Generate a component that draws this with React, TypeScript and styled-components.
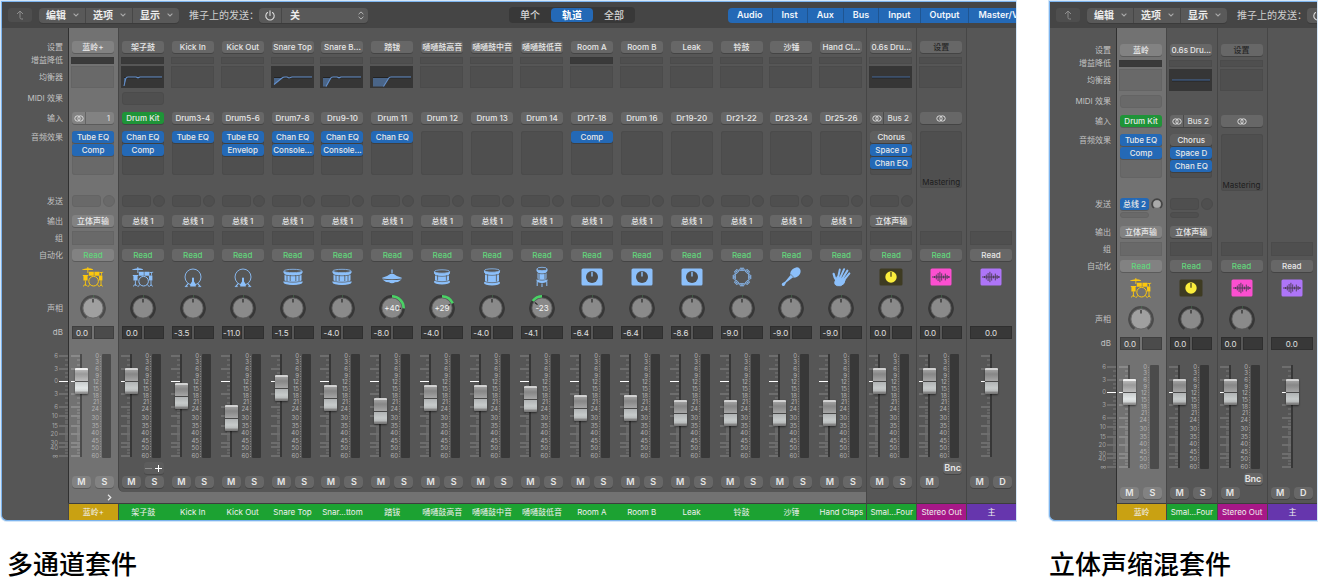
import React from "react";
import styled, { createGlobalStyle, css } from "styled-components";

const GlobalStyle = createGlobalStyle`
  *, *::before, *::after { box-sizing: border-box; }
  body {
    margin: 0;
    background: #fff;
    color: #dedede;
    font: 8px/12px Inter, "Noto Sans CJK SC", sans-serif;
  }
  button, input, select { font: inherit; color: inherit; border: 0; padding: 0; margin: 0; background: none; }
`;

/* ---------- page ---------- */

const Page = styled.main`
  display: flex;
  gap: 33px;
  padding: 1px 2px 0 1px;
`;

const Figure = styled.figure<{ $share: number }>`
  flex: ${(p) => p.$share} 1 0;
  min-width: 0;
  margin: 0;
`;

const Caption = styled.figcaption<{ $indent?: number }>`
  margin-top: 26px;
  padding-left: ${(p) => p.$indent ?? 0}px;
  color: #000;
  font: 500 26px/32px "Noto Sans CJK SC", sans-serif;
  white-space: nowrap;
`;

const MixerWindow = styled.section`
  overflow: hidden;
  background: #565656;
  border: 1px solid #7db4ee;
  border-right: 0;
  border-bottom-left-radius: 6px;
  box-shadow: 0 0 0 1px #d3e6f8;
`;

/* ---------- toolbar ---------- */

const Toolbar = styled.header`
  display: flex;
  align-items: center;
  height: 26px;
  padding-left: 6px;
  background: #454545;
  font-size: 10px;
  white-space: nowrap;
`;

const UpButton = styled.button`
  flex: none;
  display: flex;
  align-items: center;
  justify-content: center;
  width: 24px;
  height: 14px;
  margin-right: 7px;
  border-radius: 3px;
  background: #4e4e4e;
  color: #8d8d8d;
`;

const MenuGroup = styled.div`
  flex: none;
  display: flex;
  height: 15px;
  border-radius: 4px;
  background: #595959;
  box-shadow: 0 1px 0 #3b3b3b;
`;

const MenuButton = styled.button`
  display: flex;
  align-items: center;
  gap: 7px;
  padding: 0 6px 0 7px;
  font-weight: 700;
  color: #ececec;
  & + & { border-left: 1px solid #474747; }
`;

const SendLabel = styled.label`
  flex: none;
  width: 70px;
  margin-left: 10px;
  color: #cfcfcf;
`;

const PowerButton = styled.button`
  display: flex;
  align-items: center;
  justify-content: center;
  width: 22px;
  color: #dcdcdc;
`;

const SelectWrap = styled.span`
  display: flex;
  align-items: center;
  padding-right: 4px;
  border-left: 1px solid #474747;
`;

const Select = styled.select`
  appearance: none;
  width: 76px;
  height: 15px;
  padding-left: 8px;
  font-weight: 700;
  color: #ececec;
`;

const Spacer = styled.span<{ $grow: number }>`
  flex: ${(p) => p.$grow} 1 0;
`;

const Tabs = styled.div`
  flex: none;
  display: flex;
  padding: 1px 0;
  border-radius: 4px;
  background: #383838;
`;

const Tab = styled.button<{ $active?: boolean }>`
  width: 42px;
  height: 14px;
  border-radius: 4px;
  line-height: 14px;
  font-weight: ${(p) => (p.$active ? 700 : 500)};
  color: ${(p) => (p.$active ? "#fff" : "#d6d6d6")};
  background: ${(p) => (p.$active ? "#2469b6" : "transparent")};
`;

const Filters = styled.div`
  flex: 0 0 288px;
  min-width: 0;
  display: flex;
`;

const Filter = styled.button`
  flex: none;
  height: 15px;
  padding: 0 9px;
  background: #2469b6;
  color: #f2f6fb;
  font-size: 9px;
  font-weight: 600;
  &:first-child { border-radius: 4px 0 0 4px; }
  & + & { border-left: 1px solid #1f5591; }
`;

/* ---------- channel strips ---------- */

const Board = styled.div`
  display: flex;
`;

const rows = css<{ $tall?: boolean }>`
  display: grid;
  grid-template-rows: 16px 9px 26px 20px 19px 64px ${(p) => (p.$tall ? 28 : 20)}px 16px 18px 16px 30px 31px 27px 109px 14px 16px;
  padding-top: ${(p) => (p.$tall ? 16 : 13)}px;
`;

const Labels = styled.div`
  ${rows}
  flex: none;
  width: 66px;
  align-content: start;
  text-align: right;
  color: #c2c2c2;
`;

const RowLabel = styled.span<{ $line?: number }>`
  padding-right: 5px;
  line-height: ${(p) => p.$line ?? 12}px;
  white-space: nowrap;
`;

const Strip = styled.section<{ $selected?: boolean; $child?: boolean }>`
  --face: ${(p) => (p.$selected ? "#727272" : "#565656")};
  --slot: ${(p) => (p.$selected ? "#696969" : "#4f4f4f")};
  --edge: ${(p) => (p.$selected ? "#646464" : "#4b4b4b")};
  --key: ${(p) => (p.$selected ? "#828282" : "#676767")};
  --ring: ${(p) => (p.$selected ? "#4b4b4b" : "#373737")};
  --dial: ${(p) => (p.$selected ? "#a0a0a0" : "#8a8a8a")};
  --tick: ${(p) => (p.$selected ? "#a2a2a2" : "#868686")};
  --well: ${(p) => (p.$selected ? "#4b4b4b" : "#383838")};
  flex: 1 1 0;
  min-width: 0;
  background: ${(p) => (p.$child ? "#727272" : "var(--face)")};
`;

const StripBody = styled.div<{ $tall?: boolean; $line: string; $rounded?: boolean }>`
  ${rows}
  border-left: 1px solid ${(p) => p.$line};
  background: var(--face);
  border-bottom-left-radius: ${(p) => (p.$rounded ? 6 : 0)}px;
`;

const Row = styled.div<{ $wide?: boolean }>`
  display: flex;
  align-items: flex-start;
  min-width: 0;
  padding-left: ${(p) => (p.$wide ? 2 : 3)}px;
`;

const keyTones = {
  plain: "var(--key)",
  blue: "#2469b6",
  green: "#1f9438",
  grey: "#5f5f5f",
};

const Key = styled.button<{ $tone?: keyof typeof keyTones; $ink?: string; $width?: number }>`
  flex: none;
  display: block;
  width: ${(p) => p.$width ?? 42}px;
  height: 12px;
  border-radius: 3px;
  background: ${(p) => keyTones[p.$tone ?? "plain"]};
  box-shadow: 0 1px 0 rgba(0, 0, 0, 0.2);
  color: ${(p) => p.$ink ?? "#e8e8e8"};
  font-weight: 500;
  line-height: 12px;
  text-align: center;
  white-space: nowrap;
  overflow: hidden;
`;

const SplitKey = styled.div`
  display: flex;
  width: 42px;
  height: 12px;
  border-radius: 3px;
  background: var(--key);
  box-shadow: 0 1px 0 rgba(0, 0, 0, 0.2);
`;

const SplitPart = styled.button<{ $format?: boolean; $right?: boolean }>`
  display: flex;
  align-items: center;
  justify-content: ${(p) => (p.$right ? "flex-end" : "center")};
  flex: ${(p) => (p.$format ? "0 0 13px" : "1")};
  padding-right: ${(p) => (p.$right ? 4 : 0)}px;
  font-weight: 500;
  & + & { border-left: 1px solid var(--edge); }
`;

const Slot = styled.div<{ $w?: number; $h: number; $radius?: number; $lit?: boolean }>`
  flex: none;
  width: ${(p) => p.$w ?? 42}px;
  height: ${(p) => p.$h}px;
  border: 1px solid ${(p) => (p.$lit ? "#383838" : "var(--edge)")};
  border-radius: ${(p) => p.$radius ?? 0}px;
  background: ${(p) => (p.$lit ? "#3a3a3a" : "var(--slot)")};
`;

const EqView = styled.div<{ $on: boolean }>`
  width: 43px;
  height: 22px;
  border: ${(p) => (p.$on ? "0" : "1px solid var(--edge)")};
  background: ${(p) => (p.$on ? "#363636" : "var(--slot)")};
`;

const EffectRack = styled.div<{ $long?: boolean }>`
  display: flex;
  flex-direction: column;
  gap: 1px;
  width: 42px;
  height: ${(p) => (p.$long ? 57 : 44)}px;
  border-radius: 3px;
  background: var(--slot);
  box-shadow: inset 0 0 0 1px var(--edge);
`;

const MasteringButton = styled.button`
  margin-top: auto;
  height: 11px;
  color: #1d1d1d;
  line-height: 11px;
`;

const Sends = styled.div`
  display: grid;
  grid-template-columns: 29px 12px;
  column-gap: 2px;
  row-gap: 2px;
`;

const Centered = styled.div`
  display: flex;
  flex: none;
  width: 42px;
  justify-content: center;
`;

const IconBox = styled.span<{ $color: string }>`
  display: flex;
  align-items: center;
  height: 24px;
  color: ${(p) => p.$color};
`;

const KnobLabel = styled.label`
  position: relative;
  display: block;
  width: 26px;
  height: 26px;
`;

const KnobInput = styled.input`
  position: absolute;
  inset: 0;
  width: 100%;
  height: 100%;
  opacity: 0;
`;

const Levels = styled.div`
  display: flex;
  gap: 2px;
  width: 42px;
`;

const Level = styled.input`
  flex: 1;
  min-width: 0;
  width: 0;
  height: 13px;
  background: var(--well);
  box-shadow: inset 0 0 0 1px rgba(0, 0, 0, 0.15);
  color: #e0e0e0;
  text-align: center;
`;

const FaderArea = styled.div<{ $shift?: boolean }>`
  display: grid;
  grid-template: 106px / 31px 9px;
  padding-left: ${(p) => (p.$shift ? 14 : 2)}px;
`;

const ScaleSvg = styled.svg`
  grid-area: 1 / 1;
  display: block;
`;

const thumb = css`
  appearance: none;
  width: 13px;
  height: 26px;
  border: 0;
  border-radius: 1px;
  background: linear-gradient(
    #d2d2d2 0 2px, #a0a0a0 2px, #878787 6px, #8e8e8e 8px, #a6a6a6 13px,
    #484848 13px 14px, #b0b3b4 14px, #c6caca 20px, #b8bbbb 23px, #8a8a8a 24px, #747474 26px
  );
  box-shadow: 0 1px 2px rgba(0, 0, 0, 0.5);
`;

const Fader = styled.input<{ $bright?: boolean }>`
  grid-area: 1 / 1;
  align-self: center;
  appearance: none;
  writing-mode: vertical-lr;
  direction: rtl;
  width: 13px;
  height: 126px;
  margin-left: 4px;
  filter: ${(p) => (p.$bright ? "brightness(1.14)" : "none")};
  &::-webkit-slider-runnable-track { width: 13px; background: none; }
  &::-webkit-slider-thumb { -webkit-appearance: none; ${thumb} }
`;

const Meter = styled.div`
  height: 104px;
  margin-top: 1px;
  border-radius: 1px;
  background: var(--well);
`;

const Buttons = styled.div<{ $end?: boolean }>`
  display: flex;
  justify-content: ${(p) => (p.$end ? "flex-end" : "flex-start")};
  gap: 4px;
  width: 42px;
`;

const StackKeys = styled.div`
  display: flex;
  height: 12px;
  border-radius: 3px;
  background: #5c5c5c;
  box-shadow: 0 1px 0 rgba(0, 0, 0, 0.15);
`;

const StackKey = styled.button<{ $dim?: boolean }>`
  display: flex;
  align-items: center;
  justify-content: center;
  width: 10px;
  color: ${(p) => (p.$dim ? "#8e8e8e" : "#fff")};
`;

const RoundKey = styled(Key)`
  font-size: 9px;
  font-weight: 600;
  border-radius: 4px;
`;

const Foot = styled.div<{ $line: string }>`
  display: flex;
  align-items: center;
  justify-content: flex-end;
  height: 11px;
  padding-right: 6px;
  border-left: 1px solid ${(p) => p.$line};
`;

const Name = styled.h3<{ $color: string; $divided: boolean }>`
  margin: 0;
  height: 17px;
  border-top: 1px solid #3d3d3d;
  border-left: ${(p) => (p.$divided ? "1px solid #474747" : "0")};
  background: ${(p) => p.$color};
  color: #f0f0f0;
  font-size: 8px;
  font-weight: 400;
  line-height: 17px;
  text-align: center;
  white-space: nowrap;
  overflow: hidden;
`;

/* ---------- drawings ---------- */

const Chevron = () => (
  <svg width="6" height="4" viewBox="0 0 6 4" fill="none" stroke="#a9a9a9" strokeWidth="1.1">
    <path d="M.6.7 3 3 5.4.7" />
  </svg>
);

const StereoGlyph = () => (
  <svg width="10" height="7" viewBox="0 0 10 7" fill="none" stroke="#dadada">
    <circle cx="3.5" cy="3.5" r="2.7" />
    <circle cx="6.5" cy="3.5" r="2.7" />
  </svg>
);

type IconName =
  | "kit" | "kick" | "snare" | "hihat" | "tomHigh" | "tomMid" | "tomLow"
  | "mic" | "tambourine" | "shaker" | "hand" | "aux" | "wave";

const drumShape = (x: number, w: number, top: number, h: number, lugs: number[]) => {
  const rx = w / 2;
  const low = top + h - 4;
  return (
    <g>
      <path
        d={`M${x + 1} ${top + 3}V${low + 1}A${rx - 1} 2.4 0 0 0 ${x + w - 1} ${low + 1}V${top + 3}z`}
        fill="currentColor"
      />
      {lugs.map((lx) => (
        <path key={lx} d={`M${lx} ${top + 6}V${low}`} stroke="#565656" strokeWidth=".8" />
      ))}
      <path
        d={`M${x} ${top + 4.6}A${rx} 2.2 0 0 0 ${x + w} ${top + 4.6}M${x} ${low - 1}A${rx} 2.2 0 0 0 ${x + w} ${low - 1}`}
        fill="none" stroke="#565656" strokeWidth=".7"
      />
      <path d={`M${x} ${low}A${rx} 2.2 0 0 0 ${x + w} ${low}v1.6A${rx} 2.4 0 0 1 ${x} ${low + 1.6}z`} fill="currentColor" />
      <path d={`M${x} ${top + 2}v1.8A${rx} 2.2 0 0 0 ${x + w} ${top + 3.8}V${top + 2}z`} fill="currentColor" />
      <ellipse cx={12} cy={top + 2} rx={rx - 0.4} ry="1.7" fill="#565656" stroke="currentColor" strokeWidth=".8" />
    </g>
  );
};

const glyphs: Record<IconName, React.ReactNode> = {
  kit: (
    <g fill="currentColor" stroke="none">
      <path d="M1.2 4.6Q4 3.4 6.4 3.2V2h.9v1.2q3 .1 4.6 1.1v.7H7.3v3h-.9V5H1.2z" />
      <path d="M7.8 6.8h5v4h-5zM13.4 6.8h5v4h-5z" />
      <path d="M18.4 7.2l3.8-.5v.8l-1.4.3v2.6h-.8V7.9l-1.6.2z" />
      <path d="M1.8 10h5.4v1H6.6v4.6H2.4V11h-.6z" />
      <path d="M17.8 10.4h3.6v5.2h-3.2z" />
      <circle cx="12.6" cy="16.2" r="4.8" fill="none" stroke="currentColor" strokeWidth="1" />
      <path
        d="M4.4 15.4v5.4M2 21.4l2.4-2.2 2.2 2.2M8.8 19.4 7 21.8M16.4 19.4l1.8 2.4M20 15.4v5.4M18.6 21.4l1.4-1.6 1.8 1.6"
        stroke="currentColor" strokeWidth=".9" fill="none"
      />
    </g>
  ),
  kick: (
    <g fill="none" stroke="currentColor">
      <circle cx="12" cy="12" r="8" strokeWidth=".9" />
      <path d="M7.2 18.6 4.6 21.6M16.8 18.6l2.6 3M12 12.4v5" strokeWidth="1.2" />
      <path d="M9.2 21.6v-2.4l1.8-2.6V13h2v3.6l1.8 2.6v2.4z" fill="currentColor" stroke="none" />
      <path d="M3.8 21.6h3M17.2 21.6h3" strokeWidth=".8" />
    </g>
  ),
  snare: drumShape(2.5, 19, 4, 16, [6, 9.2, 14.8, 18]),
  hihat: (
    <g fill="currentColor">
      <path d="M11.4 4.5h1.2v4h-1.2z" />
      <path d="M2.2 12.8Q8 11 10.2 9h3.6q2.2 2 8 3.8v.8q-9.8 1.4-19.6 0z" />
      <path d="M2.4 14.4q9.6 1.3 19.2 0Q19 17 15 17.3q-1 .9-3 .9t-3-.9q-4-.3-6.6-2.9z" />
    </g>
  ),
  tomHigh: drumShape(4, 16, 4.5, 15, [7.6, 16.4]),
  tomMid: drumShape(4, 16, 3.5, 17, [7.6, 16.4]),
  tomLow: (
    <g>
      {drumShape(6.5, 11, 2, 16, [9, 15])}
      <path d="M7.2 16.5v4.5M16.8 16.5v4.5M12 18.5V22" stroke="currentColor" />
    </g>
  ),
  mic: (
    <g>
      <rect x="1.5" y="3.5" width="21" height="17" rx="1.5" fill="currentColor" />
      <circle cx="12" cy="12" r="6" fill="#4c4c4c" />
      <path d="M12 6.8v4.6" stroke="currentColor" strokeWidth="1.4" />
    </g>
  ),
  tambourine: (
    <g fill="none" stroke="currentColor">
      <circle cx="12" cy="12" r="7.4" strokeWidth="1.2" />
      {[0, 45, 90, 135, 180, 225, 270, 315].map((a) => (
        <g key={a} transform={`rotate(${a} 12 12)`}>
          <rect x="9.8" y="3.2" width="4.4" height="2.8" fill="#565656" stroke="none" />
          <ellipse cx="11" cy="4.3" rx=".9" ry="1.5" strokeWidth=".9" />
          <ellipse cx="13" cy="4.3" rx=".9" ry="1.5" strokeWidth=".9" />
        </g>
      ))}
    </g>
  ),
  shaker: (
    <g fill="currentColor">
      <ellipse cx="16.4" cy="7.6" rx="5.9" ry="4.5" transform="rotate(-45 16.4 7.6)" />
      <path d="M11.4 10.2l2.4 2.4-6.6 5-1.6 3q-1.4 1-2.4 0t0-2.4l3-1.600z" />
      <path d="M11.2 8.800l4 4" stroke="#565656" strokeWidth=".6" />
    </g>
  ),
  hand: (
    <g fill="none" stroke="currentColor" strokeLinecap="round">
      <path
        d="M9.200 12 10.800 4.600M11.400 12.400l3.700-8.200M13.400 13.600l5-8M15 15l5.400-6.600"
        strokeWidth="2"
      />
      <path d="M7.600 15.500Q5.200 12.500 4.600 8.800" strokeWidth="2.200" />
      <path
        d="M8.600 11.500l7.600 3.200q-.6 5-4.600 6-4 .6-5.600-1.400-1-1.800.6-4.300z"
        fill="currentColor" strokeWidth="1" strokeLinejoin="round"
      />
    </g>
  ),
  aux: (
    <g>
      <rect x=".5" y="3.500" width="23" height="17" rx="1.500" fill="#3e3b22" />
      <circle cx="12" cy="12" r="5.700" fill="#fbee3c" />
      <path d="M12 7v4.800" stroke="#3e3b22" strokeWidth="1.200" />
    </g>
  ),
  wave: (
    <g>
      <rect x="1.500" y="3.500" width="21" height="17" rx="1.500" fill="currentColor" />
      <path
        d="M3 12h18M5.500 11v2M7.300 9.600v4.800M9.100 8v8M10.900 6.800v10.400M12.700 8.400v7.200M14.500 10.600v2.800M16.300 8.600v6.800M18.100 10v4M19.700 11.200v1.600"
        stroke="#4b3b52" strokeWidth=".9"
      />
    </g>
  ),
};

const Instrument = ({ name }: { name: IconName }) => (
  <svg width="24" height="24" viewBox="0 0 24 24">
    {glyphs[name]}
  </svg>
);

const polar = (deg: number, r: number) => {
  const a = ((deg - 90) * Math.PI) / 180;
  return `${13 + r * Math.cos(a)} ${13 + r * Math.sin(a)}`;
};

const Knob = ({ pan }: { pan: number }) => {
  const angle = pan * 2.3;
  return (
    <KnobLabel>
      <svg width="26" height="26" viewBox="0 0 26 26">
        <path d={`M${polar(-146, 11.7)}A11.7 11.7 0 1 1 ${polar(146, 11.7)}`} fill="none" stroke="var(--ring)" strokeWidth="2.4" />
        <path
          d={`M${polar(0, 11.6)}A11.6 11.6 0 0 ${pan < 0 ? 0 : 1} ${polar(angle || 2, 11.6)}`}
          fill="none" stroke={pan ? "#4bd166" : "#4a8a55"} strokeWidth="2.8"
        />
        <circle cx="13" cy="13" r="10" fill="var(--dial)" stroke="#5b5b5b" strokeWidth=".6" />
        <path d="M13 4v3.4" stroke="#262626" strokeWidth="1.2" transform={`rotate(${angle} 13 13)`} />
        {pan !== 0 && (
          <text x="13" y="16" fontSize="8" fill="#f4f4f4" textAnchor="middle">
            {pan > 0 ? `+${pan}` : pan}
          </text>
        )}
      </svg>
      <KnobInput type="range" min={-64} max={63} defaultValue={pan} aria-label="声相" />
    </KnobLabel>
  );
};

const majors = [3, 16, 28, 41, 54, 63, 73, 81, 90, 94, 103];
const minors = [7, 12, 20, 24, 33, 37, 45, 50, 57, 60, 65, 68, 70, 75, 77, 79, 83, 85, 87, 92, 97, 100];

const Ticks = ({ x, color }: { x: number; color: string }) => (
  <g>
    {minors.map((y) => (
      <rect key={y} x={x + 6} y={y - 0.5} width="3" height="1" fill={color} opacity=".75" />
    ))}
    {majors.map((y) => (
      <rect key={y} x={x} y={y === 28 ? y : y - 0.5} width="9" height="1" fill={y === 28 ? "#fff" : color} />
    ))}
  </g>
);

const meterMarks: [string, number][] = [
  ["0", 3], ["3", 9], ["6", 16], ["9", 23], ["12", 29], ["15", 36], ["18", 43], ["21", 49],
  ["24", 56], ["30", 65], ["35", 73], ["40", 80], ["45", 88], ["50", 95], ["60", 103],
];

const FaderScale = ({ numbers }: { numbers: boolean }) => (
  <ScaleSvg width="31" height="106" viewBox="0 0 31 106">
    <Ticks x={0} color="var(--tick)" />
    <rect x="9" y="1" width="2" height="103" fill="var(--ring)" />
    {numbers &&
      meterMarks.map(([n, y]) => (
        <text key={n} x="28" y={y + 2} fontSize="6" textAnchor="end" fill="#b2b2b2">{n}</text>
      ))}
    {numbers && <path d="M29.5 3v101" stroke="#a0a0a0" strokeDasharray="1 1.5" strokeWidth="1" opacity=".7" />}
  </ScaleSvg>
);

const sideMarks: [string, number][] = [
  ["6", 3], ["3", 16], ["0", 28], ["3", 41], ["6", 54], ["10", 63], ["15", 73], ["20", 81], ["30", 90], ["40", 95], ["∞", 103],
];

const SideScale = () => (
  <svg width="66" height="106" viewBox="0 0 66 106">
    <Ticks x={57} color="#868686" />
    {sideMarks.map(([n, y]) => (
      <text key={y} x="56" y={y + 2} fontSize="6" textAnchor="end" fill="#a6a6a6">{n}</text>
    ))}
  </svg>
);

type EqKind = "kit" | "top" | "bottom" | "hat" | "flat";

const eqShapes: Record<EqKind, { line: string; fill?: string }> = {
  kit: { line: "M3 20 4.5 13.5Q5 11 7 11h8l2 .8 2-.8h22", fill: "M3 12h2L3 20z" },
  top: { line: "M3 18.5 11 12q1-1 3-1h2l2 1 3-1h20", fill: "M3 12h8l-8 6.5z" },
  bottom: { line: "M6 20.5 10.5 12.5Q11 11 13 11h4l2 .8 2-.8h20", fill: "M3 12h8L6.5 20.5H3z" },
  hat: { line: "M13.5 20.5 18.5 12.5Q19 11 21 11h20", fill: "M3 12h15.5l-5 8.5H3z" },
  flat: { line: "M3 11h38" },
};

const EqCurve = ({ kind }: { kind: EqKind }) => (
  <svg width="43" height="22" viewBox="0 0 43 22" fill="none">
    <path d="M3 11.8h38" stroke="#1c1c1c" />
    {eqShapes[kind].fill && <path d={eqShapes[kind].fill} fill="#4a6588" />}
    <path d={eqShapes[kind].line} stroke={kind === "flat" ? "#466a9c" : "#6490cc"} strokeWidth="1.1" />
  </svg>
);

/* ---------- data ---------- */

type Kind = "track" | "aux" | "output" | "master";

interface Channel {
  kind: Kind;
  setting?: string;
  name: string;
  color: string;
  selected?: boolean;
  child?: boolean;
  gain?: boolean;
  eq?: EqKind;
  midi?: boolean;
  input?: string;
  effects?: string[];
  send?: string;
  output?: string;
  icon: IconName;
  pan?: number;
  db: string;
  fader: number;
  stack?: boolean;
}

const GREEN = "#1ca232";
const GOLD = "#c9a112";

const drum = (
  setting: string, input: string, icon: IconName, db: string, fader: number, more: Partial<Channel> = {},
): Channel => ({
  kind: "track", setting, name: setting, color: GREEN, child: true, input, icon, db, fader, output: "总线 1", ...more,
});

const aux: Channel = {
  kind: "aux", setting: "0.6s Dru...", name: "Smal...Four", color: GREEN, eq: "flat", input: "Bus 2",
  effects: ["Chorus", "Space D", "Chan EQ"], output: "立体声输", icon: "aux", db: "0.0", fader: 75,
};
const stereoOut: Channel = {
  kind: "output", setting: "设置", name: "Stereo Out", color: "#a71888", icon: "wave", db: "0.0", fader: 75,
};
const master: Channel = { kind: "master", name: "主", color: "#6636ad", icon: "wave", db: "0.0", fader: 75 };

const multiChannel: Channel[] = [
  {
    kind: "track", setting: "蓝岭+", name: "蓝岭+", color: GOLD, selected: true, gain: true, input: "1",
    effects: ["Tube EQ", "Comp"], output: "立体声输", icon: "kit", db: "0.0", fader: 75,
  },
  drum("架子鼓", "Drum Kit", "kit", "0.0", 75, { gain: true, eq: "kit", midi: true, effects: ["Chan EQ", "Comp"], stack: true }),
  drum("Kick In", "Drum3-4", "kick", "-3.5", 60, { effects: ["Tube EQ"] }),
  drum("Kick Out", "Drum5-6", "kick", "-11.0", 38, { effects: ["Tube EQ", "Envelop"] }),
  drum("Snare Top", "Drum7-8", "snare", "-1.5", 68, { eq: "top", effects: ["Chan EQ", "Console..."] }),
  drum("Snare B...", "Dru9-10", "snare", "-4.0", 58, { name: "Snar...ttom", eq: "bottom", effects: ["Chan EQ", "Console..."] }),
  drum("踏钹", "Drum 11", "hihat", "-8.0", 45, { eq: "hat", effects: ["Chan EQ"], pan: 40 }),
  drum("嗵嗵鼓高音", "Drum 12", "tomHigh", "-4.0", 58, { pan: 29 }),
  drum("嗵嗵鼓中音", "Drum 13", "tomMid", "-4.0", 58),
  drum("嗵嗵鼓低音", "Drum 14", "tomLow", "-4.1", 57, { pan: -23 }),
  drum("Room A", "Dr17-18", "mic", "-6.4", 48, { gain: true, effects: ["Comp"] }),
  drum("Room B", "Drum 16", "mic", "-6.4", 48),
  drum("Leak", "Dr19-20", "mic", "-8.6", 43),
  drum("铃鼓", "Dr21-22", "tambourine", "-9.0", 43),
  drum("沙锤", "Dr23-24", "shaker", "-9.0", 43),
  drum("Hand Cl...", "Dr25-26", "hand", "-9.0", 43, { name: "Hand Claps" }),
  aux, stereoOut, master,
];

const stereoMix: Channel[] = [
  {
    kind: "track", setting: "蓝岭", name: "蓝岭", color: GOLD, selected: true, gain: true, midi: true,
    input: "Drum Kit", effects: ["Tube EQ", "Comp"], send: "总线 2", output: "立体声输", icon: "kit", db: "0.0", fader: 75,
  },
  aux, stereoOut, master,
];

const iconColor = (c: Channel) =>
  c.selected ? "#fbc70f" : c.kind === "output" ? "#fb4fd0" : c.kind === "master" ? "#ae75f8" : "#8cc0fb";

/* ---------- parts ---------- */

const InputKey = ({ c }: { c: Channel }) => {
  if (c.kind === "output") {
    return <SplitKey><SplitPart aria-label="立体声"><StereoGlyph /></SplitPart></SplitKey>;
  }
  if (c.input === "1" || c.input === "Bus 2") {
    return (
      <SplitKey>
        <SplitPart $format aria-label="立体声"><StereoGlyph /></SplitPart>
        <SplitPart $right={c.input === "1"}>{c.input}</SplitPart>
      </SplitKey>
    );
  }
  return <Key $tone={c.input === "Drum Kit" ? "green" : "plain"}>{c.input}</Key>;
};

const SendRow = ({ c, tall }: { c: Channel; tall?: boolean }) => (
  <Sends>
    {c.send ? <Key $tone="blue" $width={29}>{c.send}</Key> : <Slot $w={29} $h={12} $radius={3} />}
    {c.send ? (
      <svg width="12" height="12" viewBox="0 0 12 12">
        <path d="M2.8 10A5 5 0 1 1 9.2 10" fill="none" stroke="#444" strokeWidth="1.6" />
        <circle cx="6" cy="6" r="3.8" fill="#aaa" />
      </svg>
    ) : (
      <Slot $w={12} $h={12} $radius={6} />
    )}
    {tall && <Slot $w={29} $h={6} $radius={3} />}
  </Sends>
);

const ChannelStrip = ({ c, first, tall }: { c: Channel; first?: boolean; tall?: boolean }) => {
  const isMaster = c.kind === "master";
  const hasSends = c.kind === "track" || c.kind === "aux";
  const divided = !c.child || !!c.stack;
  const line = c.selected ? "#303030" : divided ? "#464646" : "#565656";
  return (
    <Strip $selected={c.selected} $child={c.child}>
      <StripBody $tall={tall} $line={line} $rounded={c.stack}>
        <Row>{c.setting && <Key $ink={c.kind === "output" ? "#262626" : undefined}>{c.setting}</Key>}</Row>
        <Row $wide>{!isMaster && <Slot $w={43} $h={7} $lit={c.gain} />}</Row>
        <Row $wide>{!isMaster && <EqView $on={!!c.eq}>{c.eq && <EqCurve kind={c.eq} />}</EqView>}</Row>
        <Row>{c.midi && <Slot $h={13} $radius={3} />}</Row>
        <Row>{!isMaster && <InputKey c={c} />}</Row>
        <Row>
          {!isMaster && (
            <EffectRack $long={c.kind === "output"}>
              {c.effects?.map((e) => <Key key={e} $tone={e === "Chorus" ? "grey" : "blue"}>{e}</Key>)}
              {c.kind === "output" && <MasteringButton>Mastering</MasteringButton>}
            </EffectRack>
          )}
        </Row>
        <Row>{hasSends && <SendRow c={c} tall={tall} />}</Row>
        <Row>{c.output && <Key>{c.output}</Key>}</Row>
        <Row><Slot $h={14} /></Row>
        <Row><Key $ink={isMaster ? "#e8e8e8" : "#63d67c"}>Read</Key></Row>
        <Row><Centered><IconBox $color={iconColor(c)}><Instrument name={c.icon} /></IconBox></Centered></Row>
        <Row>{!isMaster && <Centered><Knob pan={c.pan ?? 0} /></Centered>}</Row>
        <Row>
          <Levels>
            <Level defaultValue={c.db} aria-label="音量" />
            {!isMaster && <Level readOnly aria-label="峰值" />}
          </Levels>
        </Row>
        <FaderArea $shift={isMaster}>
          <FaderScale numbers={!isMaster} />
          <Fader type="range" min={0} max={100} defaultValue={c.fader} $bright={c.selected} aria-label={`${c.name} 推子`} />
          {!isMaster && <Meter />}
        </FaderArea>
        <Row>
          <Buttons $end>
            {c.stack && (
              <StackKeys>
                <StackKey $dim aria-label="移除">
                  <svg width="7" height="7" viewBox="0 0 7 7" stroke="currentColor"><path d="M0 3.5h7" /></svg>
                </StackKey>
                <StackKey aria-label="添加">
                  <svg width="7" height="7" viewBox="0 0 7 7" stroke="currentColor"><path d="M0 3.5h7M3.5 0v7" /></svg>
                </StackKey>
              </StackKeys>
            )}
            {c.kind === "output" && <RoundKey $width={19}>Bnc</RoundKey>}
          </Buttons>
        </Row>
        <Row>
          <Buttons>
            <RoundKey $width={19}>M</RoundKey>
            {c.kind !== "output" && <RoundKey $width={19}>{isMaster ? "D" : "S"}</RoundKey>}
          </Buttons>
        </Row>
      </StripBody>
      {!tall && (
        <Foot $line={c.child ? "#727272" : line}>
          {first && (
            <svg width="5" height="7" viewBox="0 0 5 7" fill="none" stroke="#e6e6e6" strokeWidth="1.2">
              <path d="M1 .8 3.8 3.5 1 6.2" />
            </svg>
          )}
        </Foot>
      )}
      <Name $color={c.color} $divided={divided}>{c.name}</Name>
    </Strip>
  );
};

const RowLabels = ({ tall }: { tall?: boolean }) => (
  <Labels $tall={tall}>
    <RowLabel>设置</RowLabel>
    <RowLabel $line={7}>增益降低</RowLabel>
    <RowLabel $line={22}>均衡器</RowLabel>
    <RowLabel>MIDI 效果</RowLabel>
    <RowLabel>输入</RowLabel>
    <RowLabel>音频效果</RowLabel>
    <RowLabel>发送</RowLabel>
    <RowLabel>输出</RowLabel>
    <RowLabel $line={14}>组</RowLabel>
    <RowLabel>自动化</RowLabel>
    <span />
    <RowLabel $line={26}>声相</RowLabel>
    <RowLabel $line={13}>dB</RowLabel>
    <SideScale />
  </Labels>
);

const ToolbarStart = ({ id }: { id: string }) => (
  <>
    <UpButton aria-label="上一级">
      <svg width="8" height="10" viewBox="0 0 8 10" fill="none" stroke="currentColor">
        <path d="M1 4 4 1l3 3M4 1v6.5Q4 9 5.5 9H7" />
      </svg>
    </UpButton>
    <MenuGroup>
      {["编辑", "选项", "显示"].map((t) => (
        <MenuButton key={t}>{t}<Chevron /></MenuButton>
      ))}
    </MenuGroup>
    <SendLabel htmlFor={id}>推子上的发送：</SendLabel>
    <MenuGroup>
      <PowerButton aria-label="开关">
        <svg width="10" height="11" viewBox="0 0 10 11" fill="none" stroke="currentColor" strokeLinecap="round" strokeWidth="1.1">
          <path d="M5 .8v4.7M2.5 2.5a4.2 4.2 0 1 0 5 0" />
        </svg>
      </PowerButton>
      <SelectWrap>
        <Select id={id}><option>关</option></Select>
        <svg width="6" height="9" viewBox="0 0 6 9" fill="none" stroke="#b8b8b8">
          <path d="M.6 3.2 3 .9l2.4 2.3M.6 5.800 3 8.100l2.400-2.300" />
        </svg>
      </SelectWrap>
    </MenuGroup>
  </>
);

export default function App() {
  return (
    <>
      <GlobalStyle />
      <Page lang="zh-CN">
        <Figure $share={1015}>
          <MixerWindow>
            <Toolbar>
              <ToolbarStart id="sends-multi" />
              <Spacer $grow={141} />
              <Tabs>
                <Tab>单个</Tab>
                <Tab $active>轨道</Tab>
                <Tab>全部</Tab>
              </Tabs>
              <Spacer $grow={93} />
              <Filters>
                {["Audio", "Inst", "Aux", "Bus", "Input", "Output", "Master/VCA"].map((t) => (
                  <Filter key={t}>{t}</Filter>
                ))}
              </Filters>
            </Toolbar>
            <Board>
              <RowLabels />
              {multiChannel.map((c, i) => <ChannelStrip key={c.name} c={c} first={i === 0} />)}
            </Board>
          </MixerWindow>
          <Caption $indent={6}>多通道套件</Caption>
        </Figure>
        <Figure $share={268}>
          <MixerWindow>
            <Toolbar><ToolbarStart id="sends-stereo" /></Toolbar>
            <Board>
              <RowLabels tall />
              {stereoMix.map((c) => <ChannelStrip key={c.name} c={c} tall />)}
            </Board>
          </MixerWindow>
          <Caption>立体声缩混套件</Caption>
        </Figure>
      </Page>
    </>
  );
}
